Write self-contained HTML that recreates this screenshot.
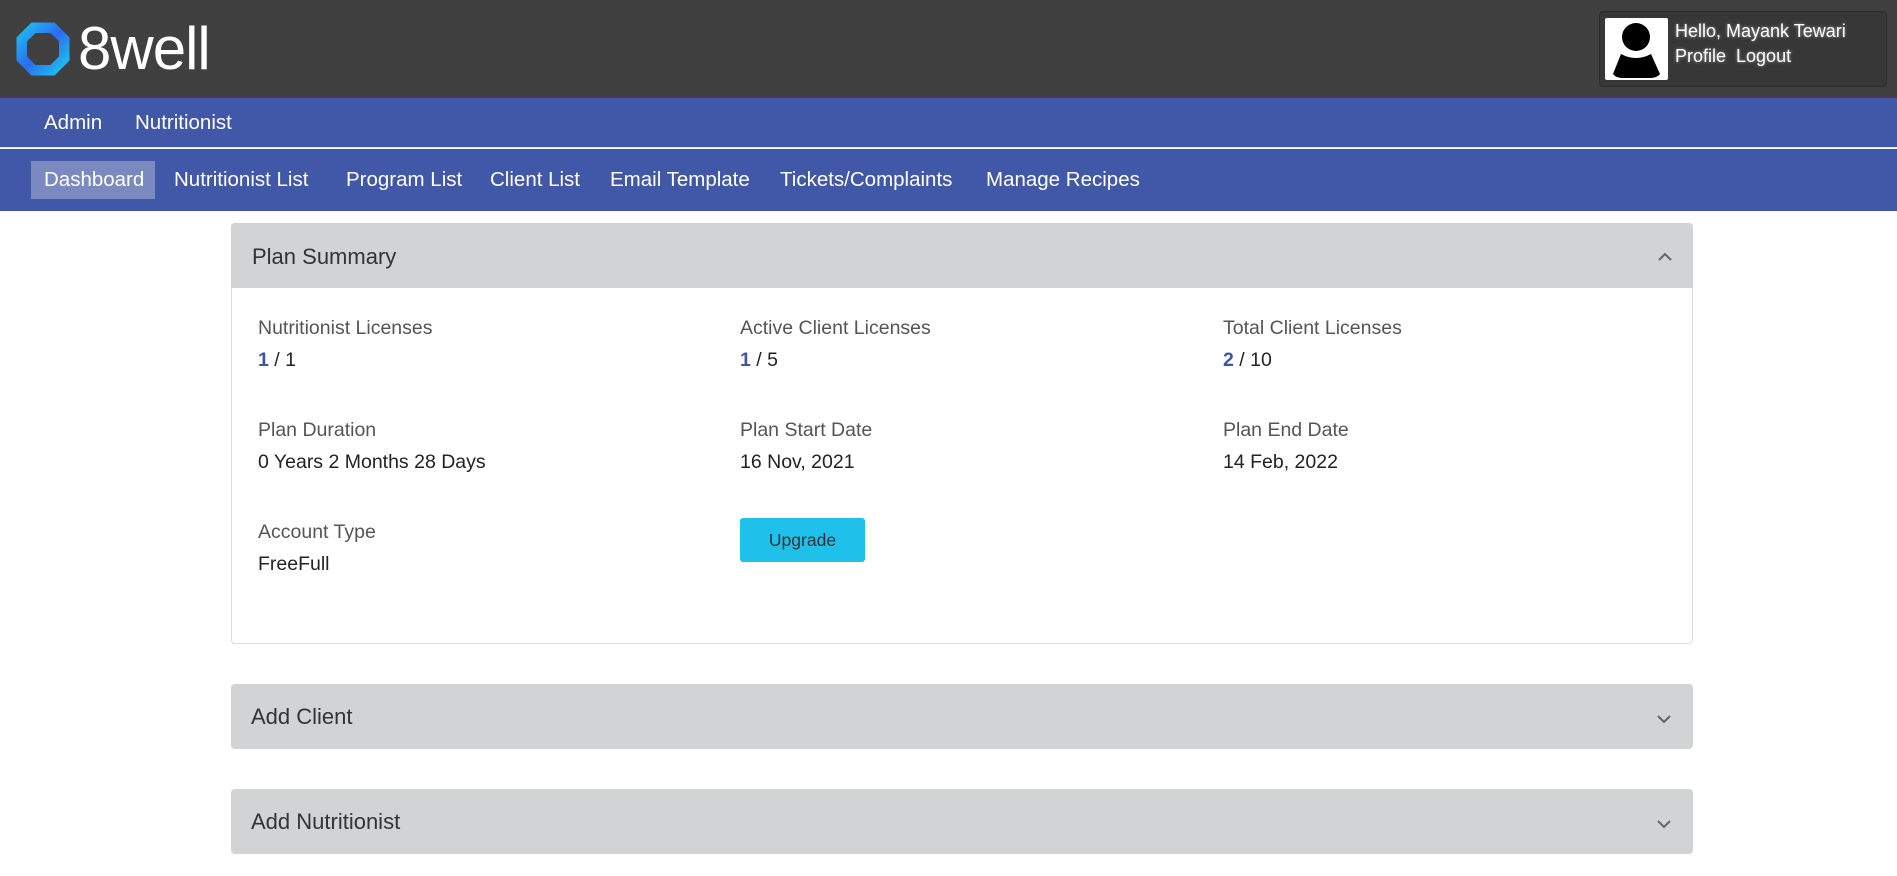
<!DOCTYPE html>
<html><head><meta charset="utf-8">
<style>
*{margin:0;padding:0;box-sizing:border-box}
body{width:1897px;height:876px;overflow:hidden;background:#fff;font-family:"Liberation Sans",sans-serif;position:relative}
.abs{position:absolute;white-space:nowrap}
#hdr{position:absolute;left:0;top:0;width:1897px;height:98px;background:#404040}
#nav1{position:absolute;left:0;top:98px;width:1897px;height:50px;background:#4157a8;border-bottom:1px solid #dfe3f2}
#nav2{position:absolute;left:0;top:149px;width:1897px;height:62px;background:#4157a8}
.n{color:#fff;font-size:20.5px;line-height:24px}
.panel{position:absolute;left:231px;width:1462px;border-radius:4px}
.ph{background:#d2d3d5;height:65px;border-radius:4px;}
.ph span{position:absolute;left:20px;top:20px;font-size:22px;color:#333}
.lbl{font-size:19.5px;color:#555}
.val{font-size:19.5px;color:#222}
.b{color:#3d55a6;font-weight:bold}
.chev{position:absolute;left:1425px;top:28px}
</style></head><body>
<div id="hdr">
  <svg class="abs" style="left:16px;top:22px" width="54" height="54" viewBox="0 0 54 54">
    <defs><linearGradient id="g" x1="0" y1="0" x2="1" y2="1"><stop offset="0" stop-color="#1ec8f0"/><stop offset="0.5" stop-color="#2a6cf0"/><stop offset="1" stop-color="#19d3ee"/></linearGradient></defs>
    <polygon points="16,2 38,2 52,16 52,38 38,52 16,52 2,38 2,16" fill="url(#g)" stroke="url(#g)" stroke-width="3" stroke-linejoin="round"/>
    <polygon points="20,12 34,12 42,20 42,34 34,42 20,42 12,34 12,20" fill="#404040" stroke="#404040" stroke-width="2" stroke-linejoin="round"/>
  </svg>
  <div class="abs" style="left:78px;top:14px;font-size:60px;color:#fff;font-weight:normal;letter-spacing:-1px;line-height:70px">8well</div>
  <div class="abs" style="left:1599px;top:11px;width:288px;height:76px;background:#373737;border:1px solid #2c2c2c;border-radius:4px"></div>
  <div class="abs" style="left:1605px;top:18px;width:63px;height:62px;background:#fff;border-radius:2px;overflow:hidden">
    <svg width="63" height="62" viewBox="0 0 63 62"><circle cx="31" cy="19" r="14" fill="#000"/><path d="M16 36 Q31 44 46 36 L55 56 Q52 60 45 60 L18 60 Q11 60 8 56 Z" fill="#000"/></svg>
  </div>
  <div class="abs" style="left:1675px;top:19px;font-size:18px;color:#fff;line-height:25px;text-shadow:0 0 3px #fff8">Hello, Mayank Tewari<br>Profile&nbsp; Logout</div>
</div>
<div id="nav1">
  <div class="abs n" style="left:44px;top:13px">Admin</div>
  <div class="abs n" style="left:135px;top:13px">Nutritionist</div>
</div>
<div id="nav2">
  <div class="abs" style="left:31px;top:12px;width:124px;height:38px;background:#7b89c1"></div>
  <div class="abs n" style="left:44px;top:19px">Dashboard</div>
  <div class="abs n" style="left:174px;top:19px">Nutritionist List</div>
  <div class="abs n" style="left:346px;top:19px">Program List</div>
  <div class="abs n" style="left:490px;top:19px">Client List</div>
  <div class="abs n" style="left:610px;top:19px">Email Template</div>
  <div class="abs n" style="left:780px;top:19px">Tickets/Complaints</div>
  <div class="abs n" style="left:986px;top:19px">Manage Recipes</div>
</div>

<div class="panel" style="top:223px;height:421px;border:1px solid #ddd">
  <div class="ph" style="border-radius:4px 4px 0 0;margin:-1px"><span>Plan Summary</span>
    <svg class="chev" width="16" height="10" viewBox="0 0 16 10"><path d="M2 8 L8 2 L14 8" stroke="#666" stroke-width="2" fill="none"/></svg></div>
</div>
<div class="abs lbl" style="left:258px;top:317px">Nutritionist Licenses</div>
<div class="abs val" style="left:258px;top:349px"><span class="b">1</span> / 1</div>
<div class="abs lbl" style="left:740px;top:317px">Active Client Licenses</div>
<div class="abs val" style="left:740px;top:349px"><span class="b">1</span> / 5</div>
<div class="abs lbl" style="left:1223px;top:317px">Total Client Licenses</div>
<div class="abs val" style="left:1223px;top:349px"><span class="b">2</span> / 10</div>
<div class="abs lbl" style="left:258px;top:419px">Plan Duration</div>
<div class="abs val" style="left:258px;top:451px">0 Years 2 Months 28 Days</div>
<div class="abs lbl" style="left:740px;top:419px">Plan Start Date</div>
<div class="abs val" style="left:740px;top:451px">16 Nov, 2021</div>
<div class="abs lbl" style="left:1223px;top:419px">Plan End Date</div>
<div class="abs val" style="left:1223px;top:451px">14 Feb, 2022</div>
<div class="abs lbl" style="left:258px;top:521px">Account Type</div>
<div class="abs val" style="left:258px;top:553px">FreeFull</div>
<div class="abs" style="left:740px;top:518px;width:125px;height:44px;background:#1fc1ea;border-radius:3px;color:#333;font-size:17.5px;text-align:center;line-height:44px">Upgrade</div>

<div class="panel" style="top:684px;height:65px"><div class="ph"><span>Add Client</span>
  <svg class="chev" style="top:30px" width="16" height="10" viewBox="0 0 16 10"><path d="M2 2 L8 8 L14 2" stroke="#666" stroke-width="2" fill="none"/></svg></div></div>
<div class="panel" style="top:789px;height:65px"><div class="ph"><span>Add Nutritionist</span>
  <svg class="chev" style="top:30px" width="16" height="10" viewBox="0 0 16 10"><path d="M2 2 L8 8 L14 2" stroke="#666" stroke-width="2" fill="none"/></svg></div></div>
</body></html>
